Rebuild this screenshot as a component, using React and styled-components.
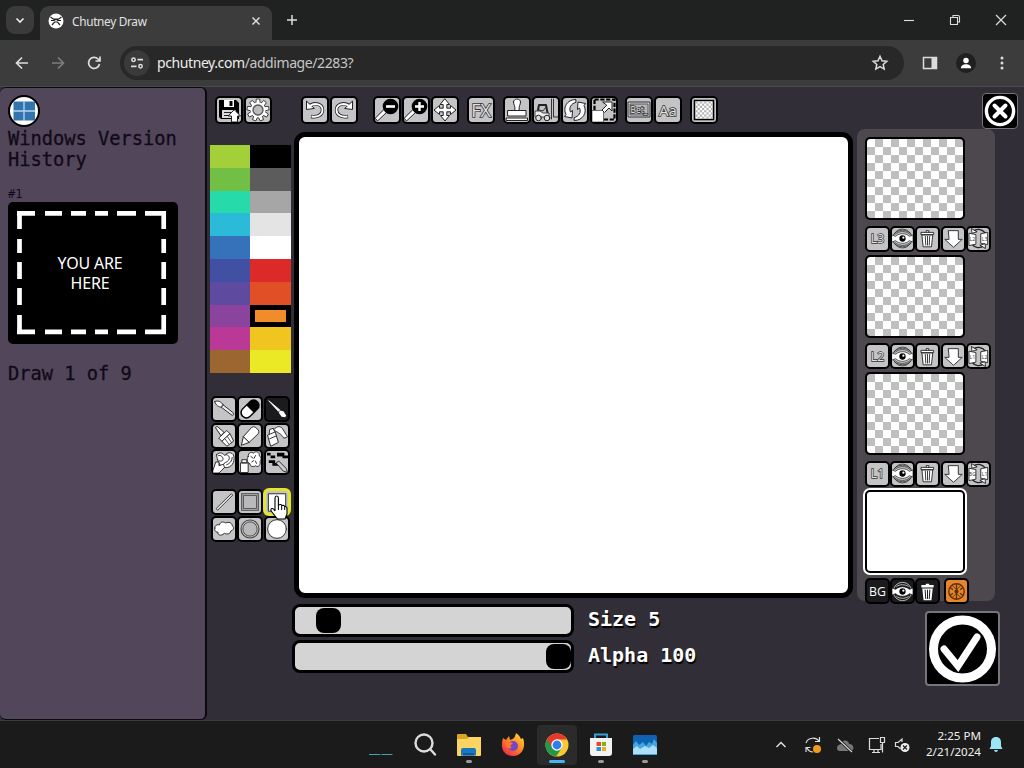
import React from "react";
import styled, { createGlobalStyle, css } from "styled-components";

const MONO = `"DejaVu Sans Mono", "Liberation Mono", monospace`;
const UI = `"Noto Sans", "Open Sans", sans-serif`;

const LEFT_COLORS = ["#a3cf39", "#71bf44", "#27daa9", "#2bbbd9", "#3672b9", "#4150a3", "#5e4a9e", "#8b449e", "#bb3996", "#9b662f"];
const RIGHT_COLORS = ["#000000", "#5c5c5c", "#a6a6a6", "#e4e4e4", "#ffffff", "#dc2a28", "#e04f26", "#f08c2b", "#f0c51f", "#ebe825"];

// outlined white shape used by most of the drawing icons
const W = { fill: "#fff", stroke: "#222", strokeWidth: 1, strokeLinejoin: "round", strokeLinecap: "round" };
const N = { ...W, fill: "none" };
const stroke = { fill: "none", stroke: "#ddd", strokeWidth: 1.5 };

const icons = {
  save: (
    <>
      <path d="M2 2h17l3 3v16H4l-2-2z" fill="#000" />
      <path d="M7 2h10v7H7z" fill="#fff" />
      <path d="M12.500 3h3v5h-3z" fill="#000" />
      <path d="M5 12h14v8H5z" fill="#ddd" />
      <path d="M7 14.500h7M7 17.500h6" stroke="#222" />
      <path d="M17.500 12l6 6h-3v6h-6v-6h-3z" {...W} />
    </>
  ),
  gear: (
    <>
      {[0, 40, 80, 120, 160, 200, 240, 280, 320].map((a) => (
        <path key={a} d="M9.800 6L10.300 1h3.400l.5 5z" transform={`rotate(${a} 12 12)`} {...W} strokeWidth=".8" />
      ))}
      <circle cx="12" cy="12" r="7.5" fill="#fff" />
      <circle cx="12" cy="12" r="5" fill="#bbb" stroke="#555" strokeWidth="1.3" />
    </>
  ),
  undo: (
    <>
      <path d="M7 7.500c5-3.500 12.500-1.500 12.500 4.500 0 5-5 7.500-11.500 6.500" fill="none" stroke="#222" strokeWidth="3.4" />
      <path d="M3.500 3.500v8l7.500-1z" {...W} />
      <path d="M7 7.800c5-3.500 12.500-1.500 12.500 4.200 0 5-5 7.500-11 6.500" fill="none" stroke="#fff" strokeWidth="1.8" />
    </>
  ),
  zoomOut: (
    <>
      <path d="M9.500 11.500l2.500 2.500-9.500 9-2-2.500z" {...W} />
      <circle cx="15.5" cy="8.5" r="7.8" fill="#000" />
      <path d="M11 8.500h9" stroke="#fff" strokeWidth="2.6" />
    </>
  ),
  zoomIn: (
    <>
      <path d="M9.500 11.500l2.500 2.500-9.500 9-2-2.500z" {...W} />
      <circle cx="15.5" cy="8.5" r="7.8" fill="#000" />
      <path d="M11 8.500h9M15.500 4v9" stroke="#fff" strokeWidth="2.4" />
    </>
  ),
  move: <path d="M12 1l4.500 5.500h-2.700v3.700h3.700V7.500L23 12l-5.500 4.500v-2.700h-3.700v3.700h2.700L12 23l-4.500-5.500h2.700v-3.700H6.500v2.700L1 12l5.500-4.500v2.700h3.700V6.500H7.500z" {...W} />,
  stamp: (
    <>
      <path d="M8.500 4c0-4 7-4 7 0 0 3-2 4-1.300 8.500H9.800C10.500 8 8.500 7 8.500 4z" {...W} />
      <path d="M3 12.500h18V18H3zM1.500 20h21v2.500h-21z" {...W} />
    </>
  ),
  forklift: (
    <>
      <path d="M4 12l1-5h7l1.500 8" {...N} strokeWidth="2" />
      <path d="M1 13h5l3 2h6v4H1z" fill="#eee" stroke="#333" strokeWidth=".9" />
      <path d="M5 12l4 1 3-4M17.500 1v20M19.500 1v18h4.500" {...N} strokeWidth=".9" />
      <circle cx="4.500" cy="20" r="2.800" {...W} fill="#ddd" />
      <circle cx="13" cy="20" r="2.800" {...W} fill="#ddd" />
    </>
  ),
  rotate: (
    <>
      <path d="M12.500 1.500C4 1.500-.5 9.500 3 16.500L1.500 18.500l7.500 1.500.5-7.500-2 1.500C5.500 10 8 5.500 12.500 4.500z" {...W} />
      <path d="M11.500 22.500c8.500 0 13-8 9.500-15l1.500-2L15 4l-.5 7.500 2-1.500c2 4-.5 8.500-5 9.500z" {...W} />
    </>
  ),
  resize: (
    <>
      <path d="M2.500 1.500h20v20h-20z" fill="none" stroke="#000" strokeWidth="2.2" strokeDasharray="4.2 1.6" />
      <path d="M0 12.500h11.500V24H0z" fill="#fff" stroke="#222" strokeWidth=".6" />
      <path d="M11 4h9v9l-3-3-4.500 4.500-2.500-2.500 4.500-4.500z" {...W} />
    </>
  ),
  texture: (
    <>
      <path d="M2.500 2.500h19v19h-19z" fill="#fff" stroke="#000" strokeWidth="1.6" />
      {Array.from({ length: 32 }, (_, i) => (
        <rect key={i} x={3.4 + (i % 4) * 4.4 + (Math.floor(i / 4) % 2 ? 2.2 : 0)} y={3.3 + Math.floor(i / 4) * 2.2} width="2.2" height="2.2" fill="#b5b5b5" />
      ))}
    </>
  ),
  brushThin: (
    <>
      <path d="M2 4c3-2 7 0 9.500 4L10 10C6 10 3 8 2 4z" {...W} />
      <path d="M11 7.500l11.500 9q.5 2-1.500 2.500L9.500 10.500z" {...W} fill="#eee" />
    </>
  ),
  eraser: (
    <g transform="rotate(-45 12 12)">
      <rect x="0" y="5.5" width="24" height="13" rx="6" fill="#000" />
      <path d="M6.500 7h5.500v10H6.500a5 5 0 010-10z" fill="#fff" />
    </g>
  ),
  inkBrush: (
    <>
      <path d="M3 3l12 10-1.500 1.500z" fill="#fff" stroke="#fff" strokeLinejoin="round" />
      <path d="M15 13.500l4 1 3 4.500-1 2-4-.5-3-4.500z" fill="#fff" />
    </>
  ),
  paintBrush: (
    <>
      <path d="M3 2.500l1.500-1L12 8l-3 3.500z" {...W} />
      <path d="M6.500 14l8.500-8 3.500 3.500-8.500 8z" {...W} />
      <path d="M10 17.500l8.500-8 4 8-7 5.500z" {...W} />
      <path d="M13.500 15.500l3.500 5M16 13l4 6" {...N} strokeWidth=".8" />
    </>
  ),
  crayon: (
    <>
      <path d="M14 2.500q2-1.500 4 0l3 3q1.500 2 0 4L11 19l-6-6z" {...W} />
      <path d="M5 13l6 6-8 3z" {...W} />
    </>
  ),
  sprayHand: (
    <>
      <path d="M2 11l8-3.500 3.500 11.500-8 4z" {...W} />
      <path d="M3.500 9.500L4 5l4-1.500L9.500 7M4 15l7-3" {...W} />
      <path d="M9 4.500C12 1 16 1 18 4l5.500 9-4 1.500c-3-5-6-6-9.500-8z" {...W} />
    </>
  ),
  smudge: (
    <>
      <path d="M4 4c4-4 7-1 9 1 3-5 10-4 10 3 0 7-5 11-11 10-5-1-8-9-8-14z" {...W} />
      <path d="M6 5c3-1 5 2 5 4s-4 3-5 1M14 4c3 0 5 3 3 6s-5 2-6 5M21 7c0 4-3 7-6 8" {...N} />
      <path d="M0 21l3-9 3.500 0 0 4 5-1.500 1 3.500-6 6H0z" {...W} />
    </>
  ),
  sprayCloud: (
    <>
      <path d="M10 6c0-5 4-5.500 5.500-3.500C18-.5 23 1 22 5c3 2 2 5 1 6.500 1 5-3 6.500-5 4.500-2 2-6 1-6-2-3-1-4-5-2-8z" {...W} />
      <path d="M13 6l2 1.500M18 5l-1.500 3M14 12l2-1.500M19 13.500L18 11" {...N} />
      <path d="M2 13h8v10.500H2zM3.500 9.500h5V13h-5z" {...W} />
    </>
  ),
  pixelPen: (
    <>
      <path d="M1 2h4v3h5v3H5V5H1zM12 2h8v3h4v3h-6V6h-6zM3 10h7v3h3v3H7v-3H3z" fill="#000" />
      <path d="M11 13l3-2 8 8 1.500 4.500L19 22z" fill="#ccc" stroke="#222" />
    </>
  ),
  line: <path d="M3.500 19L20 3l1.500 1.500L5 21z" fill="#e6e6e6" stroke="#333" />,
  square: (
    <>
      <path d="M3 3h18v18H3z" fill="#ccc" stroke="#444" strokeWidth="1.2" />
      <path d="M4.800 4.800h14.400v14.400H4.800z" fill="#b9b8ba" stroke="#444" />
    </>
  ),
  squareFill: <path d="M3 3h18.500v19H3z" {...W} />,
  blob: <path d="M2 11c-1-3 3-4 5-3.500C8 3.500 12 4 14 5.500c3-2 7 0 7 3 3 2 1 5-1.500 5.500-.5 4-5 4-7 2.500-2 3-8 3-7-1C2.500 15.500 1 13 2 11z" {...W} />,
  circle: (
    <>
      <circle cx="12" cy="12" r="9.8" fill="#ccc" stroke="#444" strokeWidth="1.2" />
      <circle cx="12" cy="12" r="7.8" fill="#b9b8ba" stroke="#444" />
    </>
  ),
  circleFill: <circle cx="12" cy="12" r="10.2" {...W} />,
  eye: (
    <>
      <circle cx="12" cy="12" r="10.8" {...N} strokeWidth=".8" />
      <path d="M2 7c5-6 15-6 20 0M4 7c4-4 12-4 16 0M2 17c5 6 15 6 20 0M4 17c4 4 12 4 16 0" {...N} strokeWidth=".8" />
      <path d="M0 8l4 1.500c5-4 11-4 16 0L24 8v8l-4-1.500c-5 4-11 4-16 0L0 16z" {...W} strokeWidth=".8" />
      <circle cx="12" cy="12" r="3.6" fill="#000" />
      <circle cx="13" cy="11" r="1.3" fill="#fff" />
    </>
  ),
  eyeDark: (
    <>
      <circle cx="12" cy="12" r="10.5" fill="none" stroke="#ccc" />
      <path d="M5 6.500c4-3 10-3 14 0M5 17.500c4 3 10 3 14 0" fill="none" stroke="#ccc" />
      <path d="M0 8l4 1.500c5-4 11-4 16 0L24 8v8l-4-1.500c-5 4-11 4-16 0L0 16z" fill="#fff" stroke="#111" strokeWidth=".8" />
      <circle cx="12" cy="12" r="3.6" fill="#000" />
      <circle cx="13" cy="11" r="1.3" fill="#fff" />
    </>
  ),
  trash: (
    <>
      <path d="M6 8h12l-1.500 13.500h-9z" {...W} />
      <path d="M5 5h14v2.500H5zM10.500 5V3h3v2" {...W} />
      <path d="M9.500 9.500l.5 10M12 9.500v10M14.500 9.500l-.5 10" {...N} />
    </>
  ),
  trashDark: (
    <>
      <path d="M6 8.500h12L16.500 22h-9zM5 4.500h5V3h4v1.500h5v3H5z" fill="#fff" />
      <path d="M9.300 10l.7 10.500M12 10v10.500M14.700 10L14 20.500" stroke="#111" strokeWidth="1.1" />
    </>
  ),
  down: <path d="M6.500 3h11v10h4.500L12 22 2 13h4.500z" {...W} />,
  wheel: (
    <>
      <circle cx="12" cy="12" r="8.8" fill="none" stroke="#5c2f08" strokeWidth="1.6" />
      <path d="M12 3.500v17M4.500 7.500L8 10M19.500 7.500L16 10M4.500 16.500L8 14M19.500 16.500L16 14" stroke="#5c2f08" strokeWidth="1.5" />
      <path d="M7 5l5 5 5-5M7 19l5-5 5 5" fill="none" stroke="#5c2f08" strokeWidth="1" />
      <circle cx="12" cy="12" r="2.4" fill="#5c2f08" />
    </>
  ),
};
icons.redo = <g transform="matrix(-1 0 0 1 24 0)">{icons.undo}</g>;

const outlined = { fill: "#e2e2e2", stroke: "#333", strokeWidth: 1.6, paintOrder: "stroke", textAnchor: "middle", fontFamily: "Open Sans" };

function swapIcon(a, b) {
  return (
    <>
      <path d="M6 4c4-4 10-3 14 2M18 20c-4 4-10 3-14-2" {...N} strokeWidth="1.4" />
      <path d="M1.500 6l7.500 1.500v11L1.500 20zM15 6.500L22.500 5v14L15 17.500z" {...W} />
      <path d="M4 1l.5 5L10 4.500zM20 23l-.5-5-5.500 1.500z" {...W} />
      <text x="5" y="15" {...outlined} stroke="none" fill="#333" fontSize="6">{a}</text>
      <text x="19" y="15" {...outlined} stroke="none" fill="#333" fontSize="6">{b}</text>
    </>
  );
}

function label(text, size = 13, dark) {
  return (
    <text x="12" y={12 + size * 0.37} {...outlined} fontSize={size} {...(dark ? { fill: "#fff", stroke: "none" } : {})}>
      {text}
    </text>
  );
}

icons.fx = label("FX", 18);
icons.font = label("Aa", 15);
icons.text = (
  <>
    <path d="M1 4h22v15H1z" fill="#d0d0d0" stroke="#333" strokeWidth="1" />
    <path d="M3 6h18v11H3z" fill="#b5b4b6" stroke="#444" strokeWidth=".8" />
    <text x="12" y="14.8" {...outlined} fill="#eee" fontSize="8.5">Bet_</text>
  </>
);

const toolbarGroups = [
  { gap: 0, items: ["save", "gear"] },
  { gap: 29, items: ["undo", "redo"] },
  { gap: 15, items: ["zoomOut", "zoomIn", "move"] },
  { gap: 8, items: ["fx"] },
  { gap: 8, items: ["stamp", "forklift", "rotate", "resize"] },
  { gap: 7, items: ["text", "font"] },
  { gap: 8.5, items: ["texture"] },
];

const layers = [
  { name: "L3", swap: ["L2", "L3"] },
  { name: "L2", swap: ["L1", "L2"] },
  { name: "L1", swap: ["BG", "L1"], shift: true },
];

function ToolButton({ icon, size = 28, ...rest }) {
  return (
    <Button $size={size} {...rest}>
      <svg viewBox="0 0 24 24">{typeof icon === "string" ? icons[icon] : icon}</svg>
    </Button>
  );
}

function Browser() {
  return (
    <>
      <TabStrip>
        <TabSearch>
          <svg width="10" height="10" viewBox="0 0 10 10"><path d="M1.500 3.500L5 7l3.500-3.500" /></svg>
        </TabSearch>
        <Tab>
          <svg width="16" height="16" viewBox="0 0 16 16">
            <circle cx="8" cy="8" r="7.5" fill="#fff" />
            <path d="M2.500 4l3 2.200h5l3-2.200M3 7.500h3l2-1.300 2 1.300h3M4 12l2.500-3h3l2.500 3" fill="none" stroke="#222" strokeWidth="1.2" />
          </svg>
          <span>Chutney Draw</span>
          <svg width="10" height="10" viewBox="0 0 10 10"><path d="M1.500 1.500l7 7M8.500 1.500l-7 7" {...stroke} /></svg>
        </Tab>
        <NewTab>
          <svg width="12" height="12" viewBox="0 0 12 12"><path d="M6 1v10M1 6h10" {...stroke} /></svg>
        </NewTab>
        <Caption>
          <svg width="12" height="12" viewBox="0 0 12 12"><path d="M1 6.500h10" {...stroke} strokeWidth="1.1" /></svg>
        </Caption>
        <Caption>
          <svg width="12" height="12" viewBox="0 0 12 12"><path d="M1.500 3.500h7v7h-7zM4 3.500v-2h5q1.500 0 1.500 1.500v5h-2" {...stroke} strokeWidth="1.1" /></svg>
        </Caption>
        <Caption>
          <svg width="12" height="12" viewBox="0 0 12 12"><path d="M1 1l10 10M11 1L1 11" {...stroke} strokeWidth="1.2" /></svg>
        </Caption>
      </TabStrip>
      <AddressRow>
        <NavIcon>
          <svg width="16" height="16" viewBox="0 0 16 16"><path d="M14 8H3M8 2.500L2.500 8 8 13.500" {...stroke} strokeWidth="1.7" /></svg>
        </NavIcon>
        <NavIcon>
          <svg width="16" height="16" viewBox="0 0 16 16"><path d="M2 8h11M8 2.500L13.500 8 8 13.500" {...stroke} stroke="#7d7d7d" strokeWidth="1.7" /></svg>
        </NavIcon>
        <NavIcon>
          <svg width="16" height="16" viewBox="0 0 16 16"><path d="M13.500 9A5.500 5.500 0 1112 4l1.500 1.500M14 1.500V6H9.500" {...stroke} strokeWidth="1.7" /></svg>
        </NavIcon>
        <Omnibox>
          <SiteInfo>
            <svg width="14" height="14" viewBox="0 0 14 14">
              <circle cx="3.5" cy="3.7" r="1.7" {...stroke} />
              <circle cx="10.5" cy="10.3" r="1.7" {...stroke} />
              <path d="M7.500 3.700H13M1 10.300h5.500" {...stroke} strokeWidth="1.8" />
            </svg>
          </SiteInfo>
          <Url>pchutney.com<em>/addimage/2283?</em></Url>
          <svg width="18" height="18" viewBox="0 0 18 18"><path d="M9 2.300l2 4.400 4.800.5-3.600 3.200 1 4.700L9 12.700l-4.200 2.400 1-4.700-3.600-3.200 4.800-.5z" {...stroke} /></svg>
        </Omnibox>
        <NavIcon>
          <svg width="16" height="16" viewBox="0 0 16 16">
            <path d="M1.500 2.500h13v11h-13z" {...stroke} /><path d="M9.500 2.500h5v11h-5z" fill="#ddd" />
          </svg>
        </NavIcon>
        <NavIcon>
          <Avatar>
            <svg width="12" height="12" viewBox="0 0 14 14"><circle cx="7" cy="4" r="3.2" fill="#fff" /><path d="M1 13c0-6 12-6 12 0z" fill="#fff" /></svg>
          </Avatar>
        </NavIcon>
        <NavIcon>
          <svg width="16" height="16" viewBox="0 0 16 16" fill="#ddd"><circle cx="8" cy="3" r="1.5" /><circle cx="8" cy="8" r="1.5" /><circle cx="8" cy="13" r="1.5" /></svg>
        </NavIcon>
      </AddressRow>
    </>
  );
}

function Sidebar() {
  return (
    <SidebarPanel>
      <GameIcon>
        <svg width="26" height="26" viewBox="0 0 26 26">
          <path d="M2.500 3.500H24v19H2.500z" fill="#3474ae" />
          <path d="M13 3v20M2 13h22" stroke="#b4d7ee" strokeWidth="1.3" />
        </svg>
      </GameIcon>
      <GameTitle>Windows Version History</GameTitle>
      <TurnNumber>#1</TurnNumber>
      <TurnCard>
        <svg width="170" height="142" viewBox="0 0 170 142" fill="none" stroke="#fff" strokeWidth="4.7">
          <path d="M9 11.300h18M37 11.300h17M63 11.300h15M87 11.300h13M109 11.300h19M137 11.300h21" />
          <path d="M9 129.800h18M37 129.800h17M63 129.800h15M87 129.800h13M109 129.800h19M137 129.800h21" />
          <path d="M11.500 9v18M11.500 37v14M11.500 60v17M11.500 86v17M11.500 113v19" />
          <path d="M155.700 9v18M155.700 37v14M155.700 60v17M155.700 86v17M155.700 113v19" />
        </svg>
        <span>YOU ARE<br />HERE</span>
      </TurnCard>
      <Progress>Draw 1 of 9</Progress>
    </SidebarPanel>
  );
}

function Tools() {
  return (
    <ToolColumn>
      <Palette>
        {LEFT_COLORS.map((c, i) => (
          <React.Fragment key={c}>
            <Swatch $color={c} />
            <Swatch $color={RIGHT_COLORS[i]} $selected={i === 7} />
          </React.Fragment>
        ))}
      </Palette>
      <ToolGrid>
        {["brushThin", "eraser", "inkBrush", "paintBrush", "crayon", "sprayHand", "smudge", "sprayCloud", "pixelPen"].map((t) => (
          <ToolButton key={t} icon={t} size={26} $dark={t === "inkBrush"} />
        ))}
      </ToolGrid>
      <ToolGrid>
        {["line", "square", "squareFill", "blob", "circle", "circleFill"].map((t) => (
          <ToolButton key={t} icon={t} size={26} $hover={t === "squareFill"} />
        ))}
        <Pointer width="18" height="25" viewBox="0 0 18 25">
          <path d="M5 14V3q0-2 1.700-2t1.700 2v7q3-1.300 3.300.5 2.800-.6 3 1 2.300 0 2.300 2v5.500L15 24H7.500L1.500 16.500q-1.500-2.500.5-3 1.500-.3 3 2.500z" fill="#fff" stroke="#000" strokeWidth="1.1" />
          <path d="M8.400 10v5M11.700 11v4M14.700 12v3" stroke="#000" />
        </Pointer>
      </ToolGrid>
    </ToolColumn>
  );
}

function Layers() {
  return (
    <LayerPanel>
      {layers.map(({ name, swap, shift }) => (
        <Layer key={name}>
          <Thumb $shift={shift} />
          <LayerActions>
            <ToolButton size={25} icon={label(name, 14)} />
            <ToolButton size={25} icon="eye" />
            <ToolButton size={25} icon="trash" />
            <ToolButton size={25} icon="down" />
            <ToolButton size={25} icon={swapIcon(...swap)} />
          </LayerActions>
        </Layer>
      ))}
      <Layer>
        <Thumb $active />
        <LayerActions>
          <ToolButton size={25} icon={label("BG", 14, true)} $dark />
          <ToolButton size={25} icon="eyeDark" $dark />
          <ToolButton size={25} icon="trashDark" $dark />
          <ToolButton size={25} icon="wheel" $orange />
        </LayerActions>
      </Layer>
    </LayerPanel>
  );
}

function Taskbar() {
  return (
    <Bar>
      <Apps>
        <TaskApp><svg width="24" height="24" viewBox="0 0 24 24"><path d="M0 21.500h11.500M12.500 21.500h11" stroke="#3fa3b5" strokeWidth="1.2" /></svg></TaskApp>
        <TaskApp>
          <svg width="24" height="24" viewBox="0 0 24 24" fill="none" stroke="#ddd" strokeWidth="2.4" strokeLinecap="round"><circle cx="11" cy="10" r="8.5" /><path d="M17.500 16.500L22 21.500" /></svg>
        </TaskApp>
        <TaskApp $mark="#9a9a9a">
          <svg width="26" height="24" viewBox="0 0 26 24">
            <path d="M1 2q0-1 1-1h8l2 3h12q1 0 1 1v17H1z" fill="#dba524" />
            <path d="M1 6h10l2-2h12v18q0 1-1 1H2q-1 0-1-1z" fill="#fbd462" />
            <path d="M5 17q0-2 2-2h11q2 0 2 2v5.500H5z" fill="#1677c3" /><path d="M7 20h11v2.500H7z" fill="#0f5b9d" />
          </svg>
        </TaskApp>
        <TaskApp>
          <svg width="24" height="24" viewBox="0 0 24 24">
            <defs><linearGradient id="fox" x1="1" y1="0" x2=".2" y2="1"><stop stopColor="#ffe23e" /><stop offset=".5" stopColor="#ff8a22" /><stop offset="1" stopColor="#f0244e" /></linearGradient></defs>
            <path d="M2 5l3 2 3-4 1 4c3-1 5-2 6-7 3 2 4 4 5 6l2-1c3 8 0 18-10 18S-1 14 2 5z" fill="url(#fox)" />
            <circle cx="12" cy="13" r="5" fill="#7845c9" /><path d="M4 10c3-2 7-1 8 1-3 0-3 3-1 4-3 1-7-1-7-5z" fill="#ff7b25" />
          </svg>
        </TaskApp>
        <TaskApp $active $mark="#4cb4ee">
          <svg width="24" height="24" viewBox="0 0 24 24">
            <circle cx="12" cy="12" r="11.5" fill="#fcc934" />
            <path d="M12 12L2 6.300A11.500 11.500 0 0011 23.500L17.500 14z" fill="#26974a" />
            <path d="M2 6.300A11.500 11.500 0 0122 6.500H12L7 14z" fill="#e5392d" />
            <circle cx="12" cy="12" r="5.7" fill="#fff" /><circle cx="12" cy="12" r="4.4" fill="#317ee8" />
          </svg>
        </TaskApp>
        <TaskApp $mark="#9a9a9a">
          <svg width="24" height="26" viewBox="0 0 24 26">
            <path d="M6 7V2.500h12V7" fill="none" stroke="#36a3d4" strokeWidth="2" />
            <path d="M1 6h22v15q0 3-3 3H4q-3 0-3-3z" fill="#f3f3f3" />
            <path d="M7.500 10H12v4H7.500z" fill="#ea4b25" /><path d="M13 10h4v4h-4z" fill="#7bb51b" />
            <path d="M7.500 15H12v4H7.500z" fill="#2395d4" /><path d="M13 15h4v4h-4z" fill="#efae1d" />
          </svg>
        </TaskApp>
        <TaskApp $mark="#9a9a9a">
          <svg width="24" height="20" viewBox="0 0 24 20">
            <rect width="24" height="19" rx="1.5" fill="#1062b0" />
            <path d="M0 10l3-4 3 4 4-3 3 4 3-4 3 2 2-5 3 4v12H0z" fill="#40a7e1" />
            <path d="M0 14l4-3 3 3 5-3 4 2 4-3 4 3v6H0z" fill="#acdff7" />
          </svg>
        </TaskApp>
      </Apps>
      <Tray>
        <TrayIcon><svg width="12" height="12" viewBox="0 0 12 12"><path d="M1.500 8L6 3.500 10.500 8" {...stroke} /></svg></TrayIcon>
        <TrayIcon>
          <svg width="18" height="18" viewBox="0 0 18 18"><path d="M2 7C4 1 12 1 15 5M15.500 1v4.500H11M2 16v-4.500h4.500M3 12q2 4 6 4" {...stroke} strokeWidth="1.2" /><circle cx="13" cy="13" r="4" fill="#f29a1f" /></svg>
        </TrayIcon>
        <TrayIcon>
          <svg width="18" height="18" viewBox="0 0 18 18"><path d="M4 15q-3 0-3-3t4-4c1-5 8-4 8 0 6 0 5 7 2 7z" fill="#777" /><path d="M2 3l14 13" stroke="#1c1c1c" strokeWidth="3" /><path d="M2 3l14 13" {...stroke} strokeWidth="1.1" /></svg>
        </TrayIcon>
        <TrayIcon>
          <svg width="18" height="18" viewBox="0 0 18 18"><path d="M11 2.500H1.500v11H13V8M4 16.500h8M6 13.500v3M10 13.500v3M12.500 1.500h4v5h-4zM14.500 6.500v10" {...stroke} strokeWidth="1.2" /></svg>
        </TrayIcon>
        <TrayIcon $narrow>
          <svg width="16" height="16" viewBox="0 0 16 16"><path d="M6.500 12L4 9.500H1.500v-4H4l4-3.500v3" {...stroke} strokeWidth="1.2" /><circle cx="11" cy="10.5" r="4.5" fill="#eee" /><path d="M9 8.500l4 4M13 8.500l-4 4" stroke="#1c1c1c" strokeWidth="1.2" /></svg>
        </TrayIcon>
        <Clock>2:25 PM<br />2/21/2024</Clock>
        <svg width="14" height="17" viewBox="0 0 14 17" fill="#9ae6f5"><path d="M7 1C3.500 1 2 3.500 2 6v4L.5 13h13L12 10V6c0-2.500-1.500-5-5-5zM5 14h4q-.5 2-2 2t-2-2z" /></svg>
      </Tray>
    </Bar>
  );
}

function App() {
  return (
    <Desktop>
      <GlobalStyle />
      <Browser />
      <Page>
        <Sidebar />
        <Workspace>
          <Toolbar>
            {toolbarGroups.map(({ gap, items }) => (
              <ToolbarGroup key={items[0]} $gap={gap}>
                {items.map((name) => <ToolButton key={name} icon={name} />)}
              </ToolbarGroup>
            ))}
          </Toolbar>
          <DrawArea>
            <Tools />
            <CanvasColumn>
              <Canvas />
              <SliderRow>
                <Slider><Knob style={{ marginLeft: `${(5 / 64) * 100}%` }} /></Slider>
                <SliderLabel>Size 5</SliderLabel>
              </SliderRow>
              <SliderRow>
                <Slider $end><Knob /></Slider>
                <SliderLabel>Alpha 100</SliderLabel>
              </SliderRow>
            </CanvasColumn>
          </DrawArea>
        </Workspace>
        <RightColumn>
          <CloseButton>
            <svg width="32" height="32" viewBox="0 0 32 32" fill="none" stroke="#fff">
              <circle cx="16" cy="16" r="13.6" strokeWidth="3.4" />
              <path d="M10.500 10.500l11 11M21.500 10.500l-11 11" strokeWidth="4" strokeLinecap="round" />
            </svg>
          </CloseButton>
          <Layers />
          <SubmitButton>
            <svg width="71" height="71" viewBox="0 0 71 71" fill="none" stroke="#fff">
              <circle cx="35.5" cy="36" r="29" strokeWidth="9" />
              <path d="M17 36l14 17L50 24" strokeWidth="7" strokeLinecap="round" />
            </svg>
          </SubmitButton>
        </RightColumn>
      </Page>
      <Taskbar />
    </Desktop>
  );
}

const GlobalStyle = createGlobalStyle`
  * { box-sizing: border-box; }
  body { margin: 0; background: #312e38; overflow: hidden; }
  svg { display: block; flex: none; }
`;

const Desktop = styled.div`
  width: 1024px;
  height: 768px;
  display: flex;
  flex-direction: column;
  font-family: ${UI};
  overflow: hidden;
`;

const center = css`
  display: flex;
  align-items: center;
  justify-content: center;
`;

const TabStrip = styled.div`
  height: 40px;
  flex: none;
  display: flex;
  background: #202221;
  padding-left: 6px;
`;

const TabSearch = styled.div`
  ${center}
  width: 28px;
  height: 28px;
  margin: 6px 6px 0 0;
  border-radius: 9px;
  background: #3b3b3b;
  path { fill: none; stroke: #eee; stroke-width: 1.6; }
`;

const Tab = styled.div`
  display: flex;
  align-items: center;
  width: 232px;
  margin-top: 6px;
  padding: 0 11px 5px 8px;
  border-radius: 9px 9px 0 0;
  background: #3c3c3c;
  color: #e2e2e2;
  font-size: 11.8px;
  span { flex: 1; margin-left: 8px; letter-spacing: -0.3px; }
`;

const NewTab = styled.div`
  ${center}
  width: 40px;
  margin-right: auto;
`;

const Caption = styled.div`
  ${center}
  width: 46px;
`;

const AddressRow = styled.div`
  height: 47px;
  flex: none;
  display: flex;
  align-items: center;
  padding: 0 4px;
  background: #3c3c3c;
  border-bottom: 1px solid #4a4a4a;
`;

const NavIcon = styled.div`
  ${center}
  width: 36px;
  height: 34px;
`;

const Omnibox = styled.div`
  display: flex;
  align-items: center;
  width: 784px;
  height: 34px;
  margin: 0 8px;
  padding: 0 15px 0 4px;
  border-radius: 17px;
  background: #282828;
`;

const SiteInfo = styled.div`
  ${center}
  width: 26px;
  height: 26px;
  border-radius: 50%;
  background: #3a3a3a;
`;

const Url = styled.div`
  flex: 1;
  margin: -1px 0 0 7px;
  color: #ececec;
  font-size: 14px;
  letter-spacing: -0.41px;
  em { font-style: normal; color: #c6c6c6; }
`;

const Avatar = styled.div`
  ${center}
  width: 20px;
  height: 20px;
  border-radius: 50%;
  background: #202020;
`;

const Page = styled.main`
  flex: 1;
  display: flex;
  min-height: 0;
  background: #312e38;
`;

const SidebarPanel = styled.aside`
  width: 207px;
  flex: none;
  padding: 7px 6px 0 8px;
  border: solid #0b0910;
  border-width: 1px 2px 1px 0;
  border-radius: 6px;
  background: #52465a;
  color: #100a18;
  font-family: ${MONO};
`;

const GameIcon = styled.div`
  ${center}
  width: 32px;
  height: 32px;
  overflow: hidden;
  border: 2px solid #000;
  border-radius: 50%;
  background: #fff;
`;

const GameTitle = styled.h1`
  margin: 1px 0 0;
  font-size: 18.7px;
  font-weight: 400;
  line-height: 21px;
  -webkit-text-stroke: 0.3px #100a18;
`;

const TurnNumber = styled.div`
  margin-top: 17px;
  font-size: 12px;
  line-height: 15px;
`;

const TurnCard = styled.div`
  display: grid;
  width: 170px;
  height: 142px;
  border-radius: 5px;
  background: #000;
  color: #fff;
  font: 16px/20px ${UI};
  letter-spacing: -0.2px;
  text-align: center;
  svg, span { grid-area: 1 / 1; }
  span { place-self: center; margin: 0 6px 0 0; }
`;

const Progress = styled.div`
  margin-top: 19px;
  font-size: 18.7px;
  line-height: 22px;
  -webkit-text-stroke: 0.3px #100a18;
`;

const Workspace = styled.section`
  width: 650px;
  flex: none;
`;

const Toolbar = styled.div`
  display: flex;
  height: 45px;
  padding: 9px 0 0 7.5px;
`;

const ToolbarGroup = styled.div`
  display: flex;
  gap: 1px;
  margin-left: ${(p) => p.$gap}px;
`;

const Button = styled.button`
  ${center}
  width: ${(p) => p.$size}px;
  height: ${(p) => Math.max(p.$size, 26)}px;
  flex: none;
  padding: 0;
  border: 2px solid #000;
  border-radius: 5px;
  background: ${(p) => (p.$dark ? "#1b1b1d" : p.$orange ? "#e68529" : "#c4c3c5")};
  ${(p) => p.$orange && "margin-left: 3px;"}
  ${(p) => p.$hover && "border-color: #e5e52c; box-shadow: 0 0 0 1px #e5e52c;"}

  svg {
    width: ${(p) => p.$size - 4}px;
    height: ${(p) => p.$size - 4}px;
  }
`;

const DrawArea = styled.div`
  display: flex;
`;

const ToolColumn = styled.div`
  width: 84px;
  flex: none;
  padding: 13px 0 0 3px;
`;

const Palette = styled.div`
  display: grid;
  grid-template-columns: 40px 41px;
  grid-auto-rows: 22.8px;
  margin-bottom: 23px;
`;

const Swatch = styled.div`
  background: ${(p) => p.$color};
  ${(p) => p.$selected && "border: 5px solid #000;"}
`;

const ToolGrid = styled.div`
  display: grid;
  grid-template-columns: repeat(3, 26px);
  gap: 0.6px;
  position: relative;
  margin: 0 0 14px 0.6px;
`;

const Pointer = styled.svg`
  position: absolute;
  left: 59px;
  top: 6px;
`;

const CanvasColumn = styled.div`
  width: 563px;
  padding-left: 3px;
`;

const Canvas = styled.div`
  width: 559px;
  height: 466px;
  border: 5px solid #000;
  border-radius: 11px;
  background: #fff;
  margin-bottom: 6px;
`;

const SliderRow = styled.div`
  display: flex;
  align-items: center;
  margin: 0 0 3px -2.5px;
`;

const Slider = styled.div`
  display: flex;
  align-items: center;
  justify-content: ${(p) => (p.$end ? "flex-end" : "flex-start")};
  width: 282px;
  height: 33px;
  border: 3px solid #000;
  border-radius: 8px;
  background: #d4d4d4;
`;

const Knob = styled.div`
  width: 25px;
  height: 25px;
  border-radius: 8px;
  background: #000;
`;

const SliderLabel = styled.span`
  margin: -4px 0 0 14.5px;
  color: #fff;
  font: 700 20px/24px ${MONO};
  text-shadow: 1px 2px 1px #000;
`;

const RightColumn = styled.div`
  flex: 1;
  display: flex;
  flex-direction: column;
`;

const CloseButton = styled.button`
  ${center}
  align-self: flex-end;
  width: 36px;
  height: 36px;
  margin: 6px 6px 0 0;
  padding: 0;
  border: 1px solid #77747a;
  border-radius: 4px;
  background: #000;
`;

const LayerPanel = styled.div`
  width: 138px;
  height: 472px;
  padding: 8px;
  border-radius: 8px;
  background: #4c484e;
`;

const Layer = styled.div`
  height: 117.6px;
`;

const Thumb = styled.div`
  width: 100px;
  height: 83px;
  margin-bottom: 5.5px;
  border: 2px solid #000;
  border-radius: 5px;
  background: ${(p) =>
    p.$active
      ? "#fff"
      : `repeating-conic-gradient(#fff 0 25%, #bfbfbf 0 50%) ${p.$shift ? "0 0" : "8px 0"} / 16px 16px padding-box`};
  ${(p) => p.$active && "box-shadow: 0 0 0 2px #fff;"}
`;

const LayerActions = styled.div`
  display: flex;
  gap: 0.2px;
`;

const SubmitButton = styled.button`
  ${center}
  width: 75px;
  height: 75px;
  margin: 9.5px 0 0 68px;
  padding: 0;
  border: 2px solid #77747a;
  border-radius: 4px;
  background: #000;
`;

const Bar = styled.footer`
  height: 48px;
  flex: none;
  display: flex;
  justify-content: space-between;
  background: #1b1b1b;
  border-top: 1px solid #3d3b40;
`;

const Apps = styled.div`
  display: flex;
  align-items: center;
  gap: 4px;
  margin-left: 361px;
`;

const TaskApp = styled.div`
  ${center}
  position: relative;
  width: 40px;
  height: 40px;
  border-radius: 4px;
  background: ${(p) => (p.$active ? "#2b2b2b" : "transparent")};

  &::after {
    content: "";
    position: absolute;
    bottom: 2px;
    width: ${(p) => (p.$active ? 16 : 6)}px;
    height: 3px;
    border-radius: 2px;
    background: ${(p) => p.$mark || "transparent"};
  }
`;

const Tray = styled.div`
  display: flex;
  align-items: center;
  padding-right: 21px;
`;

const TrayIcon = styled.div`
  ${center}
  width: ${(p) => (p.$narrow ? 18 : 32)}px;
`;

const Clock = styled.div`
  width: 70px;
  margin: -2px 8px 0 0;
  color: #f0f0f0;
  font-size: 11.6px;
  line-height: 16px;
  text-align: right;
`;

export default App;
